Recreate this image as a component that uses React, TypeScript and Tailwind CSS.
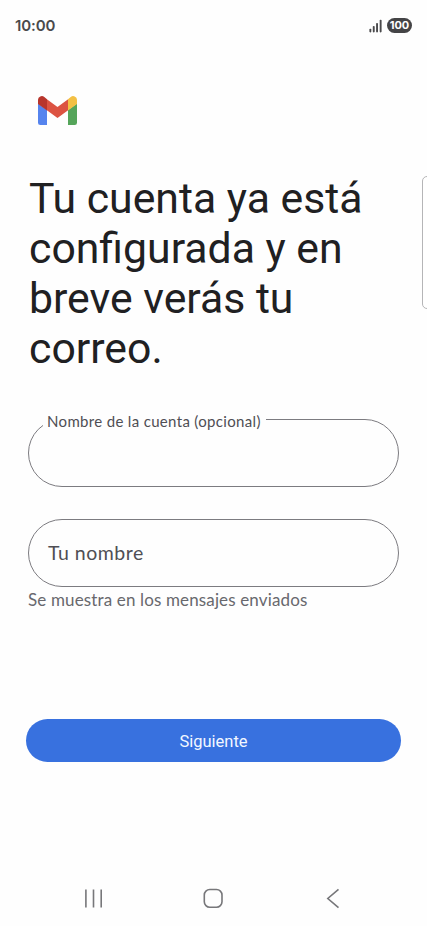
function StatusBar() {
  return (
    <header className="flex h-[51px] items-center justify-between pr-[15px] pl-[15px] text-[#4a4a4c]">
      <span className="font-['Inter',sans-serif] text-[15px] leading-5 font-semibold tracking-[-0.1px]">10:00</span>
      <div className="flex items-center gap-[5px]">
        <svg width="13" height="14" viewBox="0 0 13 14" fill="#4a4a4c">
          <rect x="0.4" y="9.8" width="1.9" height="3.6" rx="0.8" />
          <rect x="3.8" y="7" width="1.9" height="6.4" rx="0.8" />
          <rect x="7.1" y="4" width="1.9" height="9.4" rx="0.8" />
          <rect x="10.7" y="0.8" width="1.9" height="12.6" rx="0.8" />
        </svg>
        <span className="flex h-[15px] w-[25px] items-center justify-center rounded-full bg-[#444446] font-['Inter',sans-serif] text-[11px] leading-none font-bold text-white">
          100
        </span>
      </div>
    </header>
  );
}

function GmailLogo() {
  return (
    <svg className="mt-[45px] ml-[38px] block" width="39" height="29" viewBox="0 0 39 29">
      <path d="M0 7.5 9 14V29H2.3A2.3 2.3 0 0 1 0 26.7Z" fill="#5684ee" />
      <path d="M30 14 39 7.5V26.7A2.3 2.3 0 0 1 36.7 29H30Z" fill="#55a55a" />
      <path d="M8.9 3.2 19.5 11 30.1 3.2V14.3L19.5 21.9 8.9 14.3Z" fill="#dc5342" />
      <path d="M0 8V3.8A3.8 3.8 0 0 1 6.3 1L9 3.2V14.5Z" fill="#b8352c" />
      <path d="M39 8V3.8A3.8 3.8 0 0 0 32.7 1L30 3.2V14.5Z" fill="#f3c044" />
    </svg>
  );
}

function NavigationBar() {
  return (
    <nav className="mt-auto mb-[17px] flex h-[21px] items-center justify-between px-[83px] text-[#77777a]">
      <svg width="21" height="21" viewBox="0 0 21 21" stroke="currentColor" strokeWidth="1.6">
        <path d="M2.9 1.5V19.5M10.5 1.5V19.5M18.2 1.5V19.5" />
      </svg>
      <svg width="21" height="21" viewBox="0 0 21 21" fill="none" stroke="currentColor" strokeWidth="1.6">
        <rect x="1.3" y="1.5" width="17.7" height="17.7" rx="5.5" />
      </svg>
      <svg width="21" height="21" viewBox="0 0 21 21" fill="none" stroke="currentColor" strokeWidth="1.6">
        <path d="M15.5 1.3 4.8 10.5 15.5 19.7" />
      </svg>
    </nav>
  );
}

export default function App() {
  return (
    <main className="relative flex h-[926px] w-[427px] flex-col overflow-hidden bg-[#fefefe] font-['Roboto',sans-serif]">
      <StatusBar />
      <GmailLogo />
      <h1 className="mt-[48px] ml-[29px] text-[42.75px] leading-[50px] font-normal whitespace-nowrap text-[#202022]">
        Tu cuenta ya está
        <br />
        configurada y en
        <br />
        breve verás tu
        <br />
        correo.
      </h1>
      <section className="mt-[46px] ml-7 flex w-[371px] flex-col font-['Lato',sans-serif] text-[#4f4e54]">
        <label className="relative h-[68px] rounded-full border border-[#7c7b80]">
          <span className="absolute top-[-9px] left-[14px] h-5 w-[223px] bg-[#fefefe] pl-[4px] text-[15px] leading-5 tracking-[0.33px] whitespace-nowrap">
            Nombre de la cuenta (opcional)
          </span>
        </label>
        <label className="mt-8 flex h-[68px] items-center rounded-full border border-[#7c7b80] pl-[19px] text-[19.5px] tracking-[0.5px]">
          Tu nombre
        </label>
        <p className="mt-[3px] text-[17px] leading-5 tracking-[0.14px] text-[#68686d]">Se muestra en los mensajes enviados</p>
      </section>
      <button className="mt-[109px] ml-[26px] h-[43px] w-[375px] rounded-full bg-[#3871df] pt-[3px] text-[16.5px] text-[#f2f7ff]">
        Siguiente
      </button>
      <NavigationBar />
      <aside className="absolute top-[176px] right-[-5px] h-[133px] w-[10px] rounded-l-[5px] border border-[#b5b5b7] bg-white" />
    </main>
  );
}
